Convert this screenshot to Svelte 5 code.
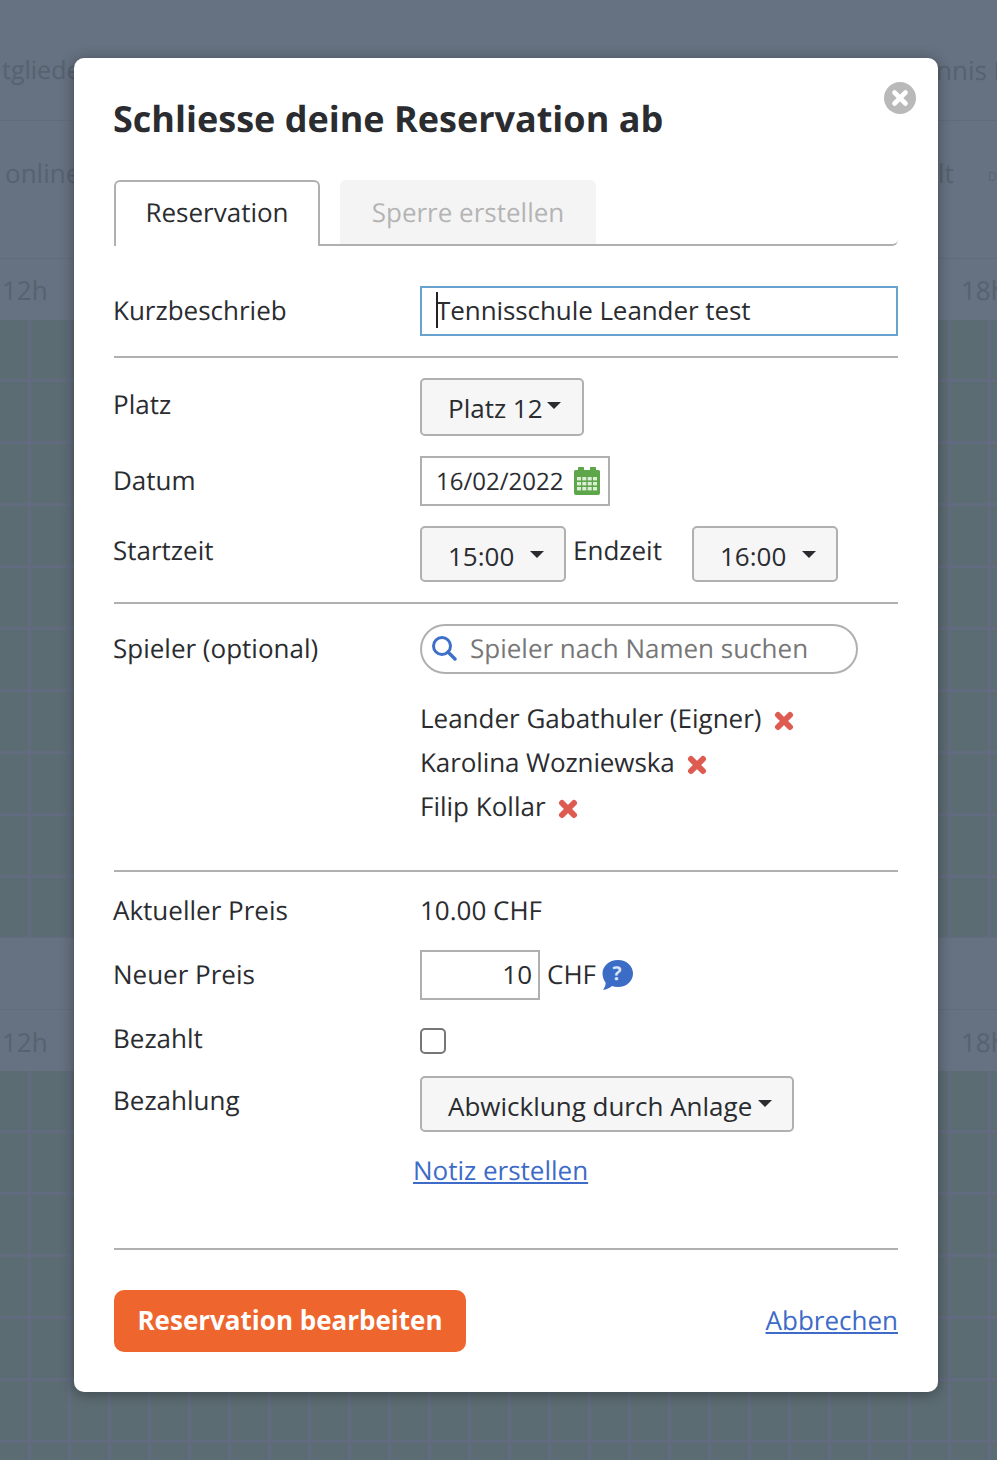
<script>
  const players = [
    'Leander Gabathuler (Eigner)',
    'Karolina Wozniewska',
    'Filip Kollar'
  ];
</script>

<div class="page">
  <div class="backdrop" aria-hidden="true">
    <div class="bg-row top"><span class="big">tgliede</span><span class="right wider">nnis L</span></div>
    <div class="bg-row second"><span class="online">online</span><span class="right lt">lt<small>D</small></span></div>
    <div class="bg-row head"><span>12h</span><span class="right h18">18h</span></div>
    <div class="cells first"></div>
    <div class="gap"></div>
    <div class="bg-row head lower"><span>12h</span><span class="right h18">18h</span></div>
    <div class="cells"></div>
  </div>

  <div class="modal">
    <button class="close" aria-label="Schliessen">
      <svg viewBox="0 0 32 32" width="32" height="32">
        <circle cx="16" cy="16" r="16" fill="#b9b9b9" />
        <path d="M10.500 10.500 21.500 21.500M21.500 10.500 10.500 21.500" stroke="#fff" stroke-width="4.600" stroke-linecap="round" />
      </svg>
    </button>

    <h1>Schliesse deine Reservation ab</h1>

    <div class="tabs">
      <div class="tab active">Reservation</div>
      <div class="tab muted">Sperre erstellen</div>
    </div>

    <div class="row kurz">
      <span class="label">Kurzbeschrieb</span>
      <div class="focus-field">
        <input class="field focus" value="Tennisschule Leander test" />
        <i class="caret"></i>
      </div>
    </div>

    <hr class="h1" />

    <div class="row platz">
      <span class="label">Platz</span>
      <button class="select tight">Platz 12<i class="arrow up"></i></button>
    </div>
    <div class="row datum">
      <span class="label">Datum</span>
      <div class="date">
        <span>16/02/2022</span>
        <svg viewBox="0 0 26 28" width="26" height="28">
          <path fill="#5ea64a" d="M4 1.500a3 3 0 0 1 6 0V3h6V1.500a3 3 0 0 1 6 0V3h2.500A1.500 1.500 0 0 1 26 4.500V26a2 2 0 0 1-2 2H2a2 2 0 0 1-2-2V4.500A1.500 1.500 0 0 1 1.500 3H4Z" />
          <g fill="#dcefd6">
            <rect x="3" y="10" width="4" height="3.400" /><rect x="8.300" y="10" width="4" height="3.400" /><rect x="13.700" y="10" width="4" height="3.400" /><rect x="19" y="10" width="4" height="3.400" />
            <rect x="3" y="15" width="4" height="3.400" /><rect x="8.300" y="15" width="4" height="3.400" /><rect x="13.700" y="15" width="4" height="3.400" /><rect x="19" y="15" width="4" height="3.400" />
            <rect x="3" y="20" width="4" height="3.400" /><rect x="8.300" y="20" width="4" height="3.400" /><rect x="13.700" y="20" width="4" height="3.400" /><rect x="19" y="20" width="4" height="3.400" />
          </g>
        </svg>
      </div>
    </div>
    <div class="row zeit">
      <span class="label">Startzeit</span>
      <div class="times">
        <button class="select time">15:00<i class="arrow"></i></button>
        <span class="endzeit">Endzeit</span>
        <button class="select time">16:00<i class="arrow"></i></button>
      </div>
    </div>

    <hr class="h2" />

    <div class="row spieler">
      <span class="label">Spieler (optional)</span>
      <div class="search">
        <svg viewBox="0 0 26 26" width="26" height="26">
          <circle cx="11" cy="11" r="8.500" fill="none" stroke="#3f70c9" stroke-width="3" />
          <path d="M17 17l7 7" stroke="#3f70c9" stroke-width="3.400" stroke-linecap="round" />
        </svg>
        <span>Spieler nach Namen suchen</span>
      </div>
    </div>

    <ul class="players">
      {#each players as p}
        <li>
          {p}
          <svg viewBox="0 0 20 20" width="20" height="20">
            <path d="M4 4 16 16M16 4 4 16" stroke="#de5b52" stroke-width="6" stroke-linecap="round" />
          </svg>
        </li>
      {/each}
    </ul>

    <hr class="h3" />

    <div class="row aktuell">
      <span class="label">Aktueller Preis</span>
      <span class="value">10.00 CHF</span>
    </div>
    <div class="row neu">
      <span class="label">Neuer Preis</span>
      <div class="price">
        <input class="field amount" value="10" />
        <span>CHF</span>
        <span class="help">
          <svg viewBox="0 0 32 30" width="32" height="30">
            <path fill="#3b6cc6" d="M17 0C25.800 0 32 6 32 13.500S25.800 27 17 27c-2.300 0-4.300-.4-6-1-2.500 2.200-5.500 3.500-9 3.800 1.800-2.200 2.700-4.500 2.700-7C2.800 20.400 1.500 17 1.500 13.500 1.500 6 8.200 0 17 0Z" />
          </svg>
          <b>?</b>
        </span>
      </div>
    </div>
    <div class="row bezahlt">
      <span class="label">Bezahlt</span>
      <span class="check"></span>
    </div>
    <div class="row bezahlung">
      <span class="label">Bezahlung</span>
      <button class="select wide">Abwicklung durch Anlage<i class="arrow up"></i></button>
    </div>
    <div class="row notiz">
      <span></span>
      <a href="#notiz">Notiz erstellen</a>
    </div>

    <hr class="h4" />

    <div class="actions">
      <button class="primary">Reservation bearbeiten</button>
      <a href="#abbrechen">Abbrechen</a>
    </div>
  </div>
</div>

<style>
  :global(body) {
    margin: 0;
    background: #667181;
  }

  .page {
    position: relative;
    width: 997px;
    height: 1460px;
    overflow: hidden;
    font-family: "Open Sans", "Noto Sans", sans-serif;
    font-size: 26px;
    color: #2a2c30;
    text-rendering: geometricPrecision;
  }

  /* dimmed calendar behind the dialog */
  .backdrop {
    position: absolute;
    inset: 0;
    display: flex;
    flex-direction: column;
    color: #57616f;
  }
  .bg-row {
    display: flex;
    justify-content: space-between;
    align-items: center;
    box-sizing: border-box;
    padding-left: 2px;
    white-space: nowrap;
  }
  .bg-row.top {
    height: 121px;
    padding-top: 19px;
    border-bottom: 1px solid #616b7b;
  }
  .big {
    font-size: 25px;
  }
  .bg-row.second {
    height: 138px;
    padding-bottom: 34px;
    border-bottom: 1px solid #616b7b;
  }
  .bg-row.head {
    height: 61px;
    flex: none;
  }
  .bg-row.lower {
    padding-top: 2px;
  }
  .online {
    padding-left: 3px;
  }
  .right {
    width: 59px;
    overflow: hidden;
    flex: none;
  }
  .right.wider {
    width: 61px;
  }
  .lt {
    display: flex;
    align-items: center;
    gap: 34px;
  }
  .lt small {
    font-size: 13px;
    padding-top: 6px;
    color: #5e6572;
  }
  .h18 {
    width: 36px;
  }
  .cells {
    flex: 1;
    background-color: #5c6c73;
    background-image:
      linear-gradient(90deg, transparent 28.5px, #626b7f 28.5px, #626b7f 31.5px, transparent 31.5px),
      linear-gradient(180deg, transparent 59px, #626b7f 59px, #626b7f 62px);
    background-size: 40px 62px;
  }
  .cells.first {
    flex: none;
    height: 618px;
  }
  .gap {
    height: 72px;
    flex: none;
    border-bottom: 1px solid #616b7b;
    box-sizing: border-box;
  }

  /* dialog */
  .modal {
    position: relative;
    box-sizing: border-box;
    width: 864px;
    height: 1334px;
    margin: 58px 0 0 74px;
    padding: 40px;
    background: #fff;
    border-radius: 10px;
    box-shadow: 0 2px 14px rgba(0, 0, 0, 0.35);
  }
  .close {
    position: absolute;
    top: 24px;
    right: 22px;
    width: 32px;
    height: 32px;
    padding: 0;
    border: 0;
    background: none;
  }
  .close svg {
    display: block;
  }

  h1 {
    margin: 0 0 0 -1px;
    font-size: 36px;
    line-height: 42px;
    font-weight: 700;
    color: #2a2c30;
  }

  .tabs {
    display: flex;
    gap: 20px;
    height: 66px;
    box-sizing: border-box;
    margin-top: 40px;
    border-bottom: 2px solid #b0b0b0;
    border-bottom-right-radius: 6px;
  }
  .tab {
    box-sizing: border-box;
    height: 66px;
    text-align: center;
    border-radius: 6px 6px 0 0;
  }
  .tab.active {
    width: 206px;
    border: 2px solid #b0b0b0;
    border-bottom: 0;
    background: #fff;
    line-height: 60px;
  }
  .tab.muted {
    width: 256px;
    height: 64px;
    line-height: 64px;
    background: #f4f4f4;
    color: #b4b4b4;
  }

  .row {
    display: grid;
    grid-template-columns: 306px 1fr;
    align-items: start;
  }
  .label,
  .value {
    line-height: 48px;
  }
  .label {
    margin-left: -1px;
  }
  .kurz {
    margin-top: 40px;
  }
  .platz {
    margin-top: 20px;
  }
  .platz .label {
    margin-top: 2px;
  }
  .datum,
  .zeit {
    margin-top: 20px;
  }
  .spieler {
    margin-top: 20px;
  }
  .aktuell {
    margin-top: 14px;
    height: 50px;
  }
  .neu {
    margin-top: 14px;
  }
  .bezahlt {
    margin-top: 14px;
    height: 50px;
  }
  .bezahlung {
    margin-top: 12px;
  }
  .notiz {
    margin-top: 19px;
    height: 40px;
  }

  hr {
    height: 2px;
    margin: 0;
    border: 0;
    background: #b0b0b0;
  }
  .h1,
  .h2 {
    margin-top: 20px;
  }
  .h3 {
    margin-top: 42px;
  }
  .h4 {
    margin-top: 57px;
  }

  .focus-field {
    position: relative;
    height: 50px;
  }
  .field {
    box-sizing: border-box;
    height: 50px;
    margin: 0;
    font: inherit;
    color: inherit;
    background: #fff;
    border: 2px solid #b0b0b0;
    border-radius: 0;
    outline: none;
  }
  .field.focus {
    display: block;
    width: 100%;
    padding: 0 14px 2px;
    border-color: #68a2cf;
    letter-spacing: -0.08px;
  }
  .caret {
    position: absolute;
    left: 16px;
    top: 6px;
    width: 1.500px;
    height: 36px;
    background: #222;
  }

  .select {
    display: flex;
    align-items: center;
    box-sizing: border-box;
    margin: 0;
    padding: 3px 0 0 26px;
    font: inherit;
    color: inherit;
    background: #f6f6f6;
    border: 2px solid #b0b0b0;
    border-radius: 5px;
  }
  .select.tight {
    width: 164px;
    height: 58px;
    padding-top: 1px;
  }
  .select.time {
    width: 146px;
    height: 56px;
  }
  .select.wide {
    width: 374px;
    height: 56px;
  }
  .arrow {
    width: 0;
    height: 0;
    margin-left: 16px;
    margin-top: -2px;
    border-left: 7.500px solid transparent;
    border-right: 7.500px solid transparent;
    border-top: 7.500px solid #2a2c30;
  }
  .arrow.up {
    margin-left: 6px;
    margin-top: -4px;
  }
  .tight .arrow.up {
    margin-left: 4px;
  }

  .date {
    display: flex;
    align-items: center;
    justify-content: space-between;
    box-sizing: border-box;
    width: 190px;
    height: 50px;
    padding: 0 8px 0 14px;
    border: 2px solid #b0b0b0;
    font-size: 24px;
  }

  .times {
    display: flex;
    align-items: flex-start;
  }
  .endzeit {
    width: 126px;
    padding-left: 7px;
    box-sizing: border-box;
    line-height: 48px;
  }

  .search {
    display: flex;
    align-items: center;
    gap: 13px;
    box-sizing: border-box;
    width: 438px;
    height: 50px;
    padding: 0 0 2px 9px;
    border: 2px solid #b0b0b0;
    border-radius: 25px;
    color: #777;
  }

  .players {
    margin: 22px 0 0 306px;
    padding: 0;
    list-style: none;
  }
  .players li {
    display: flex;
    align-items: center;
    gap: 12px;
    height: 44px;
    line-height: 44px;
  }
  .players li:nth-child(2) {
    letter-spacing: -0.1px;
  }
  .players svg {
    margin-top: 6px;
  }

  .price {
    display: flex;
    align-items: center;
  }
  .field.amount {
    width: 120px;
    padding: 0 6px 2px;
    text-align: right;
    margin-right: 7px;
  }
  .price > span:not(.help) {
    margin-top: -2px;
  }
  .help {
    position: relative;
    display: flex;
    margin-left: 5px;
    height: 30px;
  }
  .help b {
    position: absolute;
    left: 9px;
    top: -1px;
    width: 14px;
    text-align: center;
    font-size: 19px;
    line-height: 28px;
    color: #dbe5f7;
  }

  .check {
    display: block;
    box-sizing: border-box;
    width: 26px;
    height: 26px;
    margin-top: 14px;
    border: 2px solid #767676;
    border-radius: 5px;
    background: #fff;
  }

  a {
    color: #3d6bc7;
    text-decoration: underline;
    line-height: 38px;
  }
  .notiz a {
    margin-left: -7px;
  }

  .actions {
    display: flex;
    justify-content: space-between;
    align-items: center;
    margin-top: 40px;
  }
  .actions a {
    margin-bottom: 2px;
  }
  .primary {
    width: 352px;
    height: 62px;
    padding: 0 0 2px;
    font: inherit;
    font-weight: 700;
    color: #fff;
    background: #ee652d;
    border: 0;
    border-radius: 10px;
  }
</style>
